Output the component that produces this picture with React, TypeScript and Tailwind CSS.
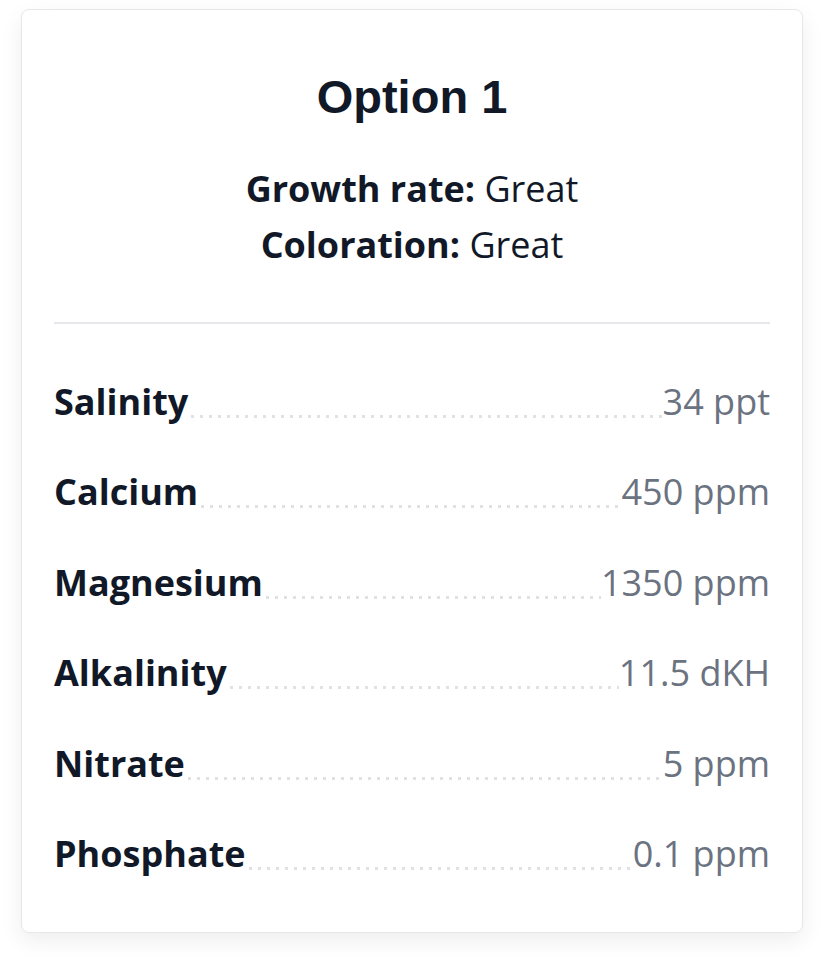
import React from "react";

interface Param {
  name: string;
  value: string;
}

const params: Param[] = [
  { name: "Salinity", value: "34 ppt" },
  { name: "Calcium", value: "450 ppm" },
  { name: "Magnesium", value: "1350 ppm" },
  { name: "Alkalinity", value: "11.5 dKH" },
  { name: "Nitrate", value: "5 ppm" },
  { name: "Phosphate", value: "0.1 ppm" },
];

const Row = ({ name, value }: Param) => (
  <div className="flex h-[54px] leading-[54px] text-[36px]">
    <span className="font-bold text-[#111827] whitespace-nowrap">{name}</span>
    <div className="flex-1 self-end mb-[11px] h-[3px] bg-[linear-gradient(to_right,#dfe1e5_3px,transparent_3px)] bg-[length:9px_3px] bg-repeat-x bg-[position:3px_0]" />
    <span className="text-[#6b7280] whitespace-nowrap">{value}</span>
  </div>
);

const App = () => {
  return (
    <div className="min-h-screen bg-white px-[21px] pt-[9px] pb-8 font-['Open_Sans',sans-serif]">
      <div className="rounded-lg border border-[#e5e7eb] bg-white px-8 pt-[59px] pb-[51px] shadow-[0_8px_22px_rgba(0,0,0,0.07)]">
        <h2 className="text-center font-['Liberation_Sans',Arial,sans-serif] font-bold text-[47px] leading-[56px] text-[#111827]">
          Option 1
        </h2>
        <div className="mt-[36px] text-center text-[36px] leading-[56px] text-[#111827]">
          <p>
            <span className="font-bold">Growth rate:</span> Great
          </p>
          <p>
            <span className="font-bold">Coloration:</span> Great
          </p>
        </div>
        <div className="mt-[49px] h-[2px] bg-[#e5e7eb]" />
        <div className="mt-[51px] flex flex-col gap-[36.4px]">
          {params.map((p) => (
            <Row key={p.name} name={p.name} value={p.value} />
          ))}
        </div>
      </div>
    </div>
  );
};

export default App;
